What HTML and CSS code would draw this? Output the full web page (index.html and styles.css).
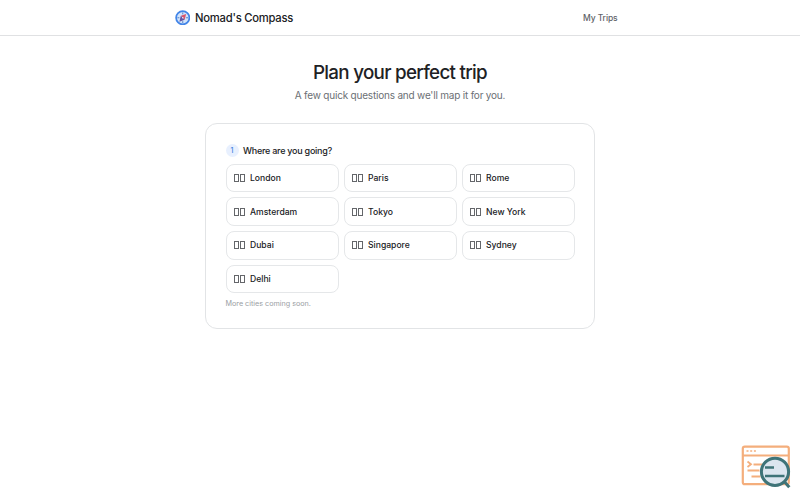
FILE: index.html
```html
<!DOCTYPE html>
<html lang="en">
<head>
    <meta charset="UTF-8">
    <meta name="viewport" content="width=device-width, initial-scale=1.0">
    <title>Nomad's Compass</title>
    <link rel="stylesheet" href="styles.css">
</head>
<body>

    <header class="site-header">
        <div class="header-inner">
            <a class="brand">
                <svg class="logo" viewBox="0 0 32 32">
                    <circle cx="16" cy="16" r="13.7" fill="#d3e4fb" stroke="#4285e8" stroke-width="3.6"/>
                    <path d="M16 5v4M16 23v4M5 16h4M23 16h4" stroke="#4f7fc4" stroke-width="2"/>
                    <path d="M23 8l-3 12-8-8z" fill="#d9566b"/>
                    <path d="M9 24l3-12 8 8z" fill="#6257a5"/>
                    <circle cx="16" cy="16" r="1.6" fill="#eef4fd"/>
                </svg>
                <span class="brand-name">Nomad's Compass</span>
            </a>
            <a class="nav-link">My Trips</a>
        </div>
    </header>

    <main>
        <h1>Plan your perfect trip</h1>
        <p class="subtitle">A few quick questions and we'll map it for you.</p>

        <section class="card">
            <h2><span class="step">1</span><span class="question">Where are you going?</span></h2>
            <div class="city-grid">
                <button class="city"><span class="flag"><i></i><i></i></span>London</button>
                <button class="city"><span class="flag"><i></i><i></i></span>Paris</button>
                <button class="city"><span class="flag"><i></i><i></i></span>Rome</button>
                <button class="city"><span class="flag"><i></i><i></i></span>Amsterdam</button>
                <button class="city"><span class="flag"><i></i><i></i></span>Tokyo</button>
                <button class="city"><span class="flag"><i></i><i></i></span>New York</button>
                <button class="city"><span class="flag"><i></i><i></i></span>Dubai</button>
                <button class="city"><span class="flag"><i></i><i></i></span>Singapore</button>
                <button class="city"><span class="flag"><i></i><i></i></span>Sydney</button>
                <button class="city"><span class="flag"><i></i><i></i></span>Delhi</button>
            </div>
            <p class="hint">More cities coming soon.</p>
        </section>
    </main>

    <svg class="inspect-badge" viewBox="0 0 50 44" fill="none">
        <rect x="1.8" y="1.6" width="46" height="37.6" rx="2" stroke="#f4ae7c" stroke-width="2.2"/>
        <path d="M2 10.5h46" stroke="#f4ae7c" stroke-width="2"/>
        <path d="M5.5 6h2M9.2 6h2M12.9 6h2" stroke="#f4ae7c" stroke-width="1.6"/>
        <path d="M6.5 16.5l3.5 2.7-3.5 2.8M12.5 19.5h9M6.5 25.5h12M10.5 31.5h9" stroke="#f4ae7c" stroke-width="1.8"/>
        <circle cx="34" cy="26.8" r="13.6" fill="#dce6ef" stroke="#3f7478" stroke-width="3"/>
        <path d="M24 22.5h9M24 31h19.5" stroke="#3f7478" stroke-width="2.4"/>
        <path d="M43 36.3l5.3 6" stroke="#3f7478" stroke-width="3"/>
    </svg>

</body>
</html>
```
FILE: styles.css
```css
* {
    box-sizing: border-box;
}

body {
    font-family: Inter, "Open Sans", sans-serif;
    background-color: #fff;
    color: #202124;
    margin: 0;
}

.site-header {
    height: 36px;
    border-bottom: 1px solid #e0e1e3;
}

.header-inner {
    width: 451px;
    height: 35px;
    margin: 0 auto;
    padding-right: 8px;
    display: flex;
    align-items: center;
    justify-content: space-between;
}

.brand {
    display: flex;
    align-items: center;
    gap: 5px;
}

.logo {
    width: 15.5px;
    height: 15.5px;
}

.brand-name {
    font-size: 11.25px;
    font-weight: 500;
    letter-spacing: -0.25px;
}

.nav-link {
    font-size: 8.5px;
    font-weight: 500;
    letter-spacing: -0.12px;
    color: #5f6368;
}

main {
    width: 390px;
    margin: 0 auto;
    padding-top: 25px;
}

h1 {
    margin: 0;
    font-size: 18.8px;
    line-height: 24px;
    font-weight: 500;
    letter-spacing: -0.7px;
    text-align: center;
}

.subtitle {
    margin: 3px 0 0;
    font-size: 10px;
    line-height: 14px;
    letter-spacing: -0.2px;
    text-align: center;
    color: #6b6f74;
}

.card {
    height: 206px;
    margin-top: 21px;
    padding: 19.5px;
    border: 1px solid #e2e4e6;
    border-radius: 12px;
}

h2 {
    display: flex;
    align-items: center;
    gap: 4.5px;
    height: 13px;
    margin: 0 0 7px;
    font-size: 9px;
    font-weight: 500;
    letter-spacing: -0.25px;
}

.step {
    width: 13px;
    height: 13px;
    border-radius: 50%;
    background-color: #e8f0fe;
    color: #4280df;
    font-size: 7px;
    line-height: 13px;
    letter-spacing: 0;
    text-align: center;
}

.city-grid {
    display: grid;
    grid-template-columns: repeat(3, 1fr);
    grid-auto-rows: 28.7px;
    gap: 5px;
}

.city {
    display: flex;
    align-items: center;
    gap: 5px;
    padding: 0 7.5px;
    border: 1px solid #e5e7e9;
    border-radius: 8px;
    background-color: #fff;
    color: #202124;
    font-family: inherit;
    font-size: 8.6px;
    font-weight: 500;
}

.flag {
    display: flex;
    gap: 1px;
}

.flag i {
    width: 5px;
    height: 8px;
    border: 1px solid #64666a;
}

.hint {
    margin: 6px 0 0;
    font-size: 7.2px;
    line-height: 10px;
    color: #9a9ea3;
}

.inspect-badge {
    position: fixed;
    right: 9px;
    bottom: 11px;
    width: 50px;
    height: 44px;
}
```
